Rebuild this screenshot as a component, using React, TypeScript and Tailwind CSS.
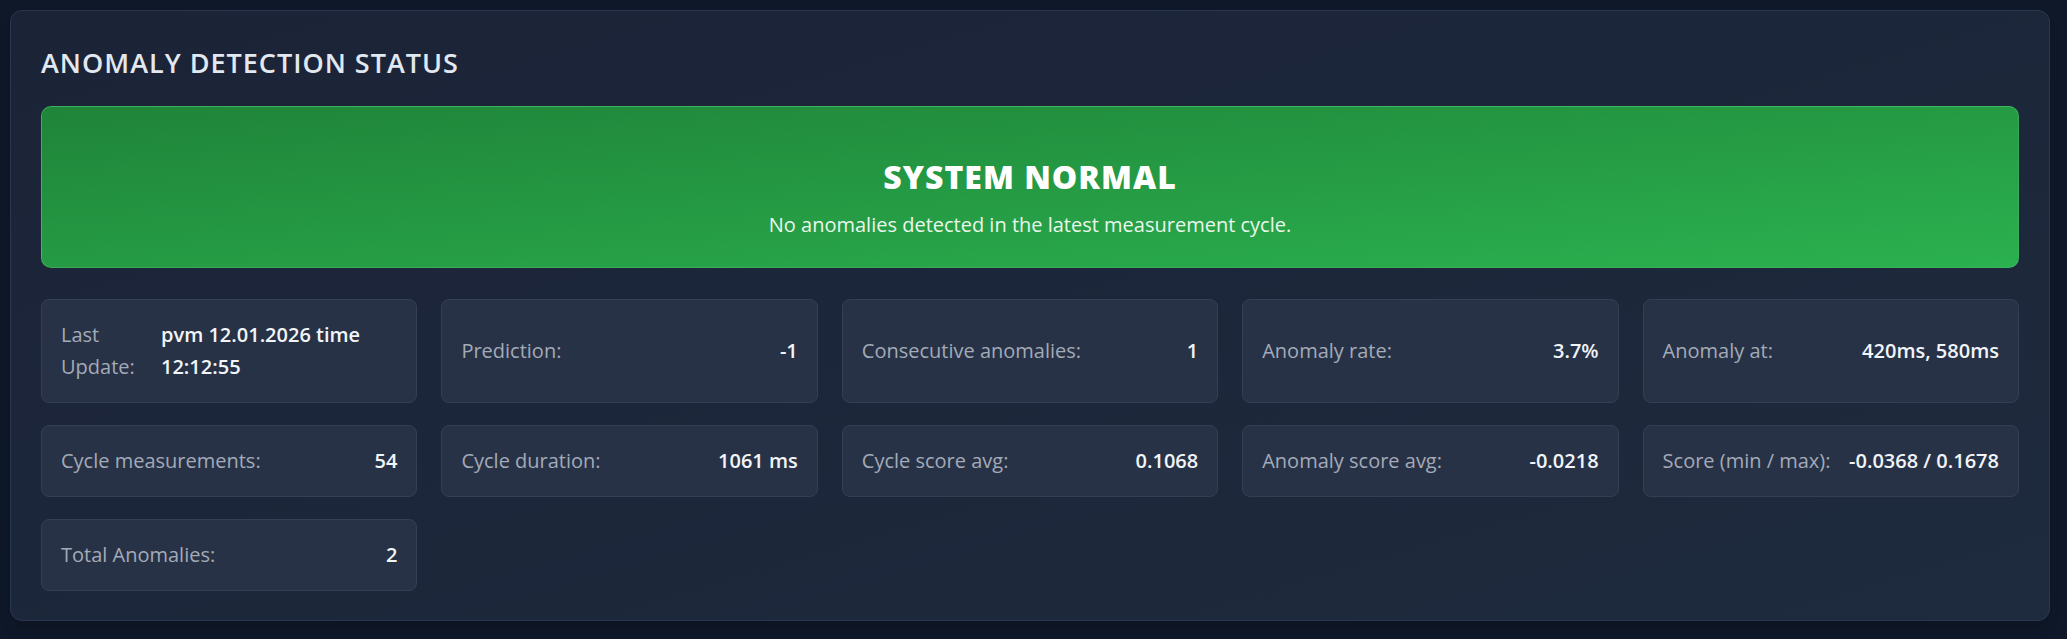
const stats = [
  { label: 'Last Update:', value: 'pvm 12.01.2026 time 12:12:55', wrap: true },
  { label: 'Prediction:', value: '-1' },
  { label: 'Consecutive anomalies:', value: '1' },
  { label: 'Anomaly rate:', value: '3.7%' },
  { label: 'Anomaly at:', value: '420ms, 580ms' },
  { label: 'Cycle measurements:', value: '54' },
  { label: 'Cycle duration:', value: '1061 ms' },
  { label: 'Cycle score avg:', value: '0.1068' },
  { label: 'Anomaly score avg:', value: '-0.0218' },
  { label: 'Score (min / max):', value: '-0.0368 / 0.1678' },
  { label: 'Total Anomalies:', value: '2' },
]

function StatCard({ label, value, wrap }: { label: string; value: string; wrap?: boolean }) {
  if (wrap) {
    return (
      <div className="flex items-center rounded-lg border border-[#343f55] bg-[#283246] px-[19px] py-[19px] text-[20px] leading-[32px]">
        <span className="w-[100px] shrink-0 text-[#a3aab8]">{label}</span>
        <span className="flex-1 text-left font-semibold text-[#f1f5f9]">{value}</span>
      </div>
    )
  }
  return (
    <div className="flex items-center justify-between gap-[14px] rounded-lg border border-[#343f55] bg-[#283246] px-[19px] py-[19px] text-[20px] leading-[32px]">
      <span className="whitespace-nowrap text-[#a3aab8]">{label}</span>
      <span className="whitespace-nowrap font-semibold text-[#f1f5f9]">{value}</span>
    </div>
  )
}

export default function App() {
  return (
    <div
      className="min-h-screen bg-[#0f1828] pt-[10px] pl-[10px] pr-[17px] pb-[16px]"
      style={{ fontFamily: '"Segoe UI", "Open Sans", "Noto Sans", sans-serif' }}
    >
      <div className="rounded-xl border border-[#2a3753] bg-gradient-to-br from-[#1b2337] to-[#1e2a3d] px-[30px] pt-[30px] pb-[29px] shadow-lg">
        <h2 className="text-[27px] font-semibold leading-[44px] tracking-[1px] text-[#e2e8f0]">
          ANOMALY DETECTION STATUS
        </h2>

        {/* Status banner */}
        <div className="mt-[21px] flex h-[162px] flex-col items-center rounded-[10px] border border-[#4cc06c]/60 bg-gradient-to-br from-[#1f8439] to-[#2bb14f] pt-[51px] text-center">
          <div className="text-[32px] font-extrabold leading-[38px] tracking-[1px] text-white">
            SYSTEM NORMAL
          </div>
          <div className="mt-[14px] text-[20px] leading-[30px] text-[#eaf7ec]">
            No anomalies detected in the latest measurement cycle.
          </div>
        </div>

        <div className="mt-[31px] grid grid-cols-5 gap-x-[24px] gap-y-[22px]">
          {stats.map((s) => (
            <StatCard key={s.label} {...s} />
          ))}
        </div>
      </div>
    </div>
  )
}
